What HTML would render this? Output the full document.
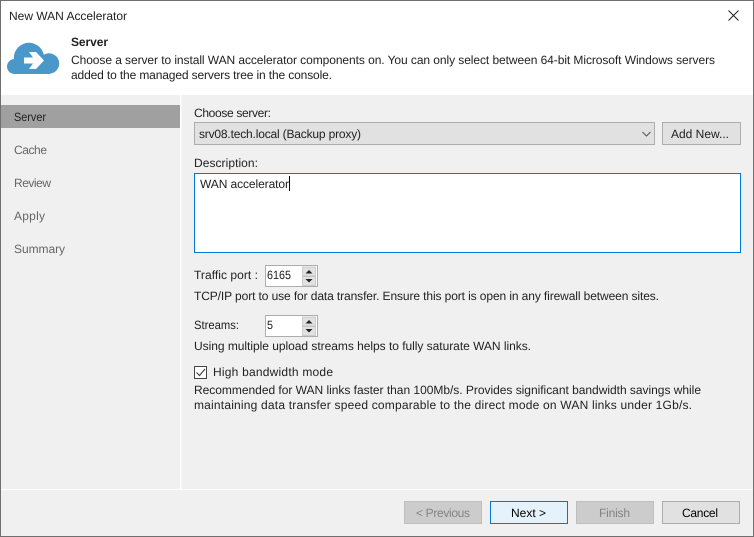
<!DOCTYPE html>
<html><head><meta charset="utf-8">
<style>
html,body{margin:0;padding:0;background:#f0f0f0;overflow:hidden}
svg{display:block;font-family:"Liberation Sans",sans-serif;font-size:12px;fill:#222}
text{text-rendering:geometricPrecision}
</style></head><body>
<svg width="754" height="537" viewBox="0 0 754 537" xmlns="http://www.w3.org/2000/svg">
<rect width="754" height="537" fill="#f0f0f0"/>
<rect x="0" y="0" width="754" height="95" fill="#fff"/>
<rect x="180" y="95" width="1.5" height="394" fill="#fff"/>
<rect x="0" y="489" width="754" height="1" fill="#fff"/>
<rect x="1" y="105" width="179" height="23" fill="#a0a0a0"/>
<rect x=".5" y=".5" width="753" height="536" fill="none" stroke="#6f6f6f"/>

<path d="M728.500 10.500l10 10M738.500 10.500l-10 10" stroke="#222" stroke-width="1" fill="none"/>

<g fill="#4a98c9">
<circle cx="29" cy="58" r="15.200"/>
<circle cx="49" cy="63.500" r="10.200"/>
<circle cx="14.500" cy="66.500" r="7.500"/>
<rect x="14" y="60" width="36" height="14"/>
</g>
<path d="M24 57.500H33L29 52H36L44 60.500L36 69H29L33 63.500H24Z" fill="#fff"/>

<text x="9" y="20" textLength="118">New WAN Accelerator</text>
<text x="71" y="46" textLength="37" font-weight="bold">Server</text>
<text x="71" y="64" textLength="644">Choose a server to install WAN accelerator components on. You can only select between 64-bit Microsoft Windows servers</text>
<text x="71" y="79" textLength="261">added to the managed servers tree in the console.</text>

<text x="14" y="121" textLength="32" lengthAdjust="spacingAndGlyphs">Server</text>
<text x="14" y="154" textLength="33" fill="#666">Cache</text>
<text x="14" y="187" textLength="37" fill="#666">Review</text>
<text x="14" y="220" textLength="31" fill="#666">Apply</text>
<text x="14" y="253" textLength="51" fill="#666">Summary</text>

<text x="194" y="117" textLength="77">Choose server:</text>
<rect x="194.500" y="122.500" width="460" height="22" fill="#e1e1e1" stroke="#adadad"/>
<text x="199" y="138" textLength="162">srv08.tech.local (Backup proxy)</text>
<path d="M642.500 132l4 4 4-4" fill="none" stroke="#555"/>
<rect x="662.500" y="122.500" width="78" height="22" fill="#e1e1e1" stroke="#adadad"/>
<text x="671" y="138" textLength="58">Add New...</text>

<text x="194" y="167" textLength="64">Description:</text>
<rect x="194.500" y="173.500" width="546" height="79" fill="#fff" stroke="#0078d7"/>
<text x="200" y="188" textLength="89">WAN accelerator</text>
<rect x="289" y="176" width="1" height="15" fill="#000"/>

<text x="194" y="279" textLength="64">Traffic port :</text>
<rect x="265.500" y="265.500" width="52" height="21" fill="#fff" stroke="#adadad"/>
<text x="267" y="279" textLength="24" lengthAdjust="spacingAndGlyphs">6165</text>
<rect x="302.500" y="267" width="13" height="9" fill="#e1e1e1" stroke="#b5b5b5" stroke-width=".6"/>
<rect x="302.500" y="276.500" width="13" height="9" fill="#e1e1e1" stroke="#b5b5b5" stroke-width=".6"/>
<path d="M305.500 273.500h7l-3.500-3.500zM305.500 279h7l-3.500 3.500z" fill="#222"/>
<text x="194" y="300" textLength="465">TCP/IP port to use for data transfer. Ensure this port is open in any firewall between sites.</text>

<text x="194" y="329" textLength="45" lengthAdjust="spacingAndGlyphs">Streams:</text>
<rect x="265.500" y="315.500" width="52" height="21" fill="#fff" stroke="#adadad"/>
<text x="267" y="329" textLength="6" lengthAdjust="spacingAndGlyphs">5</text>
<rect x="302.500" y="317" width="13" height="9" fill="#e1e1e1" stroke="#b5b5b5" stroke-width=".6"/>
<rect x="302.500" y="326.500" width="13" height="9" fill="#e1e1e1" stroke="#b5b5b5" stroke-width=".6"/>
<path d="M305.500 323.500h7l-3.500-3.500zM305.500 329h7l-3.500 3.500z" fill="#222"/>
<text x="194" y="350" textLength="337">Using multiple upload streams helps to fully saturate WAN links.</text>

<rect x="194.500" y="366.500" width="12" height="12" fill="#fff" stroke="#444"/>
<path d="M196.500 372.500l3 3 5.500-6.500" fill="none" stroke="#444" stroke-width="1.200"/>
<text x="213" y="376" textLength="120">High bandwidth mode</text>
<text x="194" y="394" textLength="507">Recommended for WAN links faster than 100Mb/s. Provides significant bandwidth savings while</text>
<text x="194" y="409" textLength="498">maintaining data transfer speed comparable to the direct mode on WAN links under 1Gb/s.</text>

<rect x="404.500" y="501.500" width="77" height="22" fill="#ccc" stroke="#bfbfbf"/>
<text x="416" y="517" textLength="54" fill="#838383">&lt; Previous</text>
<rect x="490.500" y="501.500" width="77" height="22" fill="#e5f1fb" stroke="#0078d7"/>
<text x="511" y="517" textLength="35" fill="#000">Next &gt;</text>
<rect x="576.500" y="501.500" width="77" height="22" fill="#ccc" stroke="#bfbfbf"/>
<text x="599" y="517" textLength="31" fill="#838383">Finish</text>
<rect x="662.500" y="501.500" width="77" height="22" fill="#e1e1e1" stroke="#adadad"/>
<text x="682" y="517" textLength="36" fill="#000">Cancel</text>
</svg>
</body></html>
